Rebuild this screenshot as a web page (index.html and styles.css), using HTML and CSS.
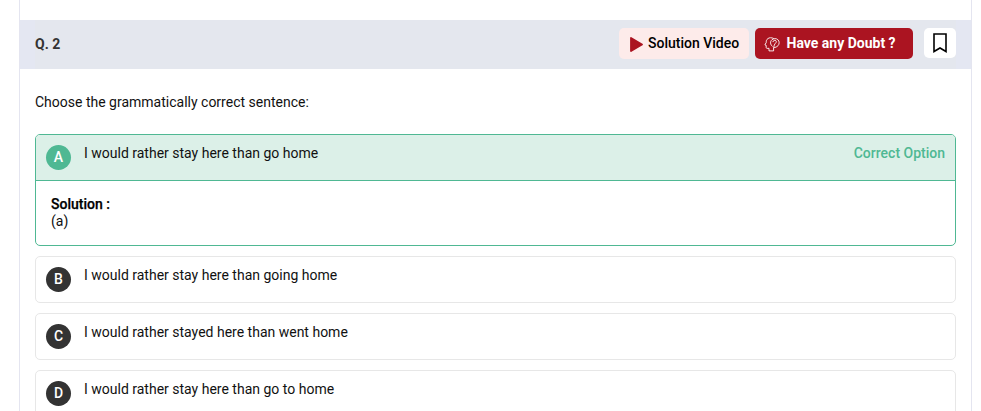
FILE: index.html
```html
<!DOCTYPE html>
<html lang="en">
<head>
<meta charset="utf-8">
<title>Question 2</title>
<link rel="stylesheet" href="styles.css">
</head>
<body>
<main class="panel">
  <header class="bar">
    <div class="bar-inner">
      <h1 class="number">Q. 2</h1>
      <button class="btn video">
        <svg width="13" height="15" viewBox="0 0 13 15"><path d="M1 1 12 7.5 1 14Z" fill="#ab1421" stroke="#ab1421" stroke-width="1.8" stroke-linejoin="round"/></svg>
        <span>Solution Video</span>
      </button>
      <button class="btn doubt">
        <svg width="16" height="15" viewBox="0 0 16 15" fill="none" stroke="#fff" stroke-width=".9" stroke-linecap="round" stroke-linejoin="round"><path d="M9.500 1.400C7.500.4 5.300.5 3.900 1.600 2.500 2.600 2.100 3.900 2.300 5.300L.9 7.900l1.300.5v2.200c.2 1 1.300.9 2.800.7v2.600h4.600v-3"/><path d="M8.200 9.200C6.100 7.600 6 4.400 7.900 2.800c1.700-1.500 4.400-1.600 6-.1 1.700 1.600 1.600 4.400.1 6-1 1.200-2.500 1.700-4.200 2"/><path d="M8.900 4.700c.2-2 3.600-1.900 3.400.2-.1 1.300-2.200 1.600-2.500 5"/></svg>
        <span>Have any Doubt ?</span>
      </button>
      <button class="bookmark" aria-label="Bookmark">
        <svg width="14" height="20" viewBox="0 0 14 20"><path d="M1 1H13V18.500L7 15 1 18.500Z" fill="none" stroke="#000" stroke-width="1.600"/></svg>
      </button>
    </div>
  </header>
  <section class="content">
    <p class="question">Choose the grammatically correct sentence:</p>
    <div class="options">
      <article class="option correct">
        <div class="row"><span class="letter">A</span><span class="text">I would rather stay here than go home</span><span class="tag">Correct Option</span></div>
        <div class="solution"><b>Solution :</b><div>(a)</div></div>
      </article>
      <article class="option"><div class="row"><span class="letter">B</span><span class="text">I would rather stay here than going home</span></div></article>
      <article class="option"><div class="row"><span class="letter">C</span><span class="text">I would rather stayed here than went home</span></div></article>
      <article class="option"><div class="row"><span class="letter">D</span><span class="text">I would rather stay here than go to home</span></div></article>
    </div>
  </section>
</main>
</body>
</html>
```
FILE: styles.css
```css
* { box-sizing: border-box; }
body { margin: 0; background: #fff; color: #111; font: 14px/17px Roboto, sans-serif; }
.panel { width: 953px; height: 411px; overflow: hidden; margin-left: 19px; padding-top: 20px; border: solid #e4e5f0; border-width: 0 1px; }
.bar { height: 49px; padding: 0 15px; background: #e4e7f2; }
.bar-inner { width: 921px; height: 49px; padding-top: 8px; display: flex; align-items: flex-start; background: #e4e7ee; }
.number { margin: 8px auto 0 0; font-size: 14px; line-height: 17px; font-weight: 700; color: #333; }
button { border: 0; padding: 0; font: 500 14px/17px Roboto, sans-serif; }
.btn { height: 31px; display: flex; align-items: center; border-radius: 5px; white-space: nowrap; }
.video { width: 130px; padding-left: 11px; gap: 5px; margin-right: 6px; background: #fdebea; color: #000; }
.video svg { margin-top: 2px; }
.doubt { width: 158px; padding-left: 9px; gap: 6.5px; margin-right: 11px; background: #ab1421; color: #fff; font-weight: 700; }
.doubt svg { margin-top: 2px; }
.bookmark { width: 32px; height: 30px; display: grid; place-items: center; border-radius: 5px; background: #fff; }
.content { padding: 25px 15px 0; }
.question { margin: 0 0 23px; }
.options { display: grid; gap: 10px; }
.option { border: 1px solid #e7e7e7; border-radius: 5px; overflow: hidden; }
.row { height: 45px; padding: 10px 10px 0; display: flex; align-items: flex-start; }
.letter { width: 25px; height: 25px; margin-right: 13px; border-radius: 50%; background: #333; color: #fff; font-weight: 500; line-height: 25px; text-align: center; }
.tag { margin-left: auto; color: #4fb893; font-weight: 500; }
.correct { height: 112px; border-color: #4fb893; }
.correct .row { height: 46px; background: #dcf0e8; border-bottom: 1px solid #4fb893; }
.correct .letter { background: #4fb893; }
.solution { padding: 15px 15px 0; }
.solution b { display: block; color: #000; font-weight: 500; -webkit-text-stroke: .25px #000; }
```
